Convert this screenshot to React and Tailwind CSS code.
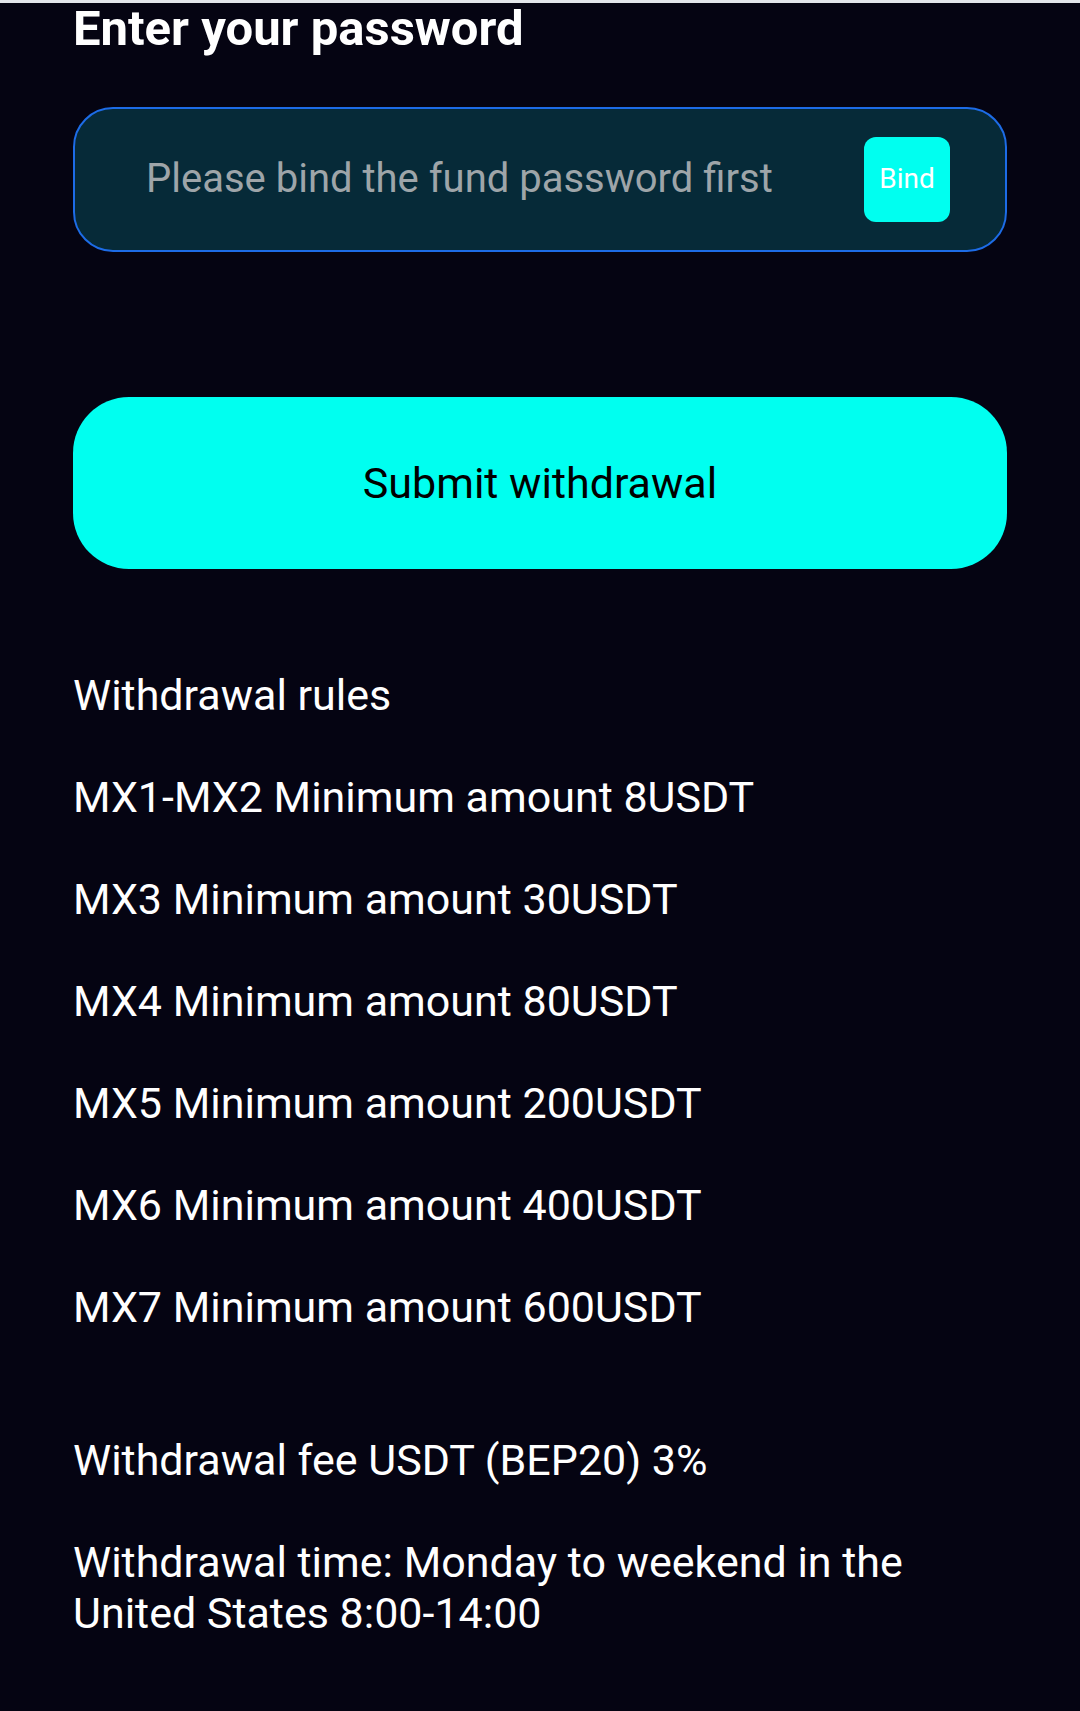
export default function App() {
  const rules = [
    "Withdrawal rules",
    "MX1-MX2 Minimum amount 8USDT",
    "MX3 Minimum amount 30USDT",
    "MX4 Minimum amount 80USDT",
    "MX5 Minimum amount 200USDT",
    "MX6 Minimum amount 400USDT",
    "MX7 Minimum amount 600USDT",
  ];

  return (
    <div className="min-h-[1711px] w-[1080px] bg-[#050412] font-['Roboto',sans-serif] text-white border-t-[3px] border-[#e3e6ea]">
      <div className="px-[73px] pb-[80px]">
        <h1 className="text-[49px] font-bold leading-[1.08]">Enter your password</h1>

        {/* fund password field */}
        <div className="mt-[51px] h-[145px] rounded-[40px] border-2 border-[#1d6ce6] bg-[#062a38] flex items-center pl-[71px] pr-[55px]">
          <input
            className="flex-1 min-w-0 bg-transparent outline-none text-[40px] placeholder:text-[#9ea5a9]"
            placeholder="Please bind the fund password first"
          />
          <button className="w-[86px] h-[85px] rounded-[12px] bg-[#00fff0] text-white text-[28px]">
            Bind
          </button>
        </div>

        <button className="mt-[145px] w-full h-[172px] rounded-[56px] bg-[#00fff0] text-black text-[43px]">
          Submit withdrawal
        </button>

        <div className="mt-[101px] flex flex-col gap-[51px] text-[43px] leading-[51px]">
          {rules.map((r) => (
            <p key={r}>{r}</p>
          ))}
          <p className="mt-[51px]">Withdrawal fee USDT (BEP20) 3%</p>
          <p>
            Withdrawal time: Monday to weekend in the
            <br />
            United States 8:00-14:00
          </p>
        </div>
      </div>
    </div>
  );
}
